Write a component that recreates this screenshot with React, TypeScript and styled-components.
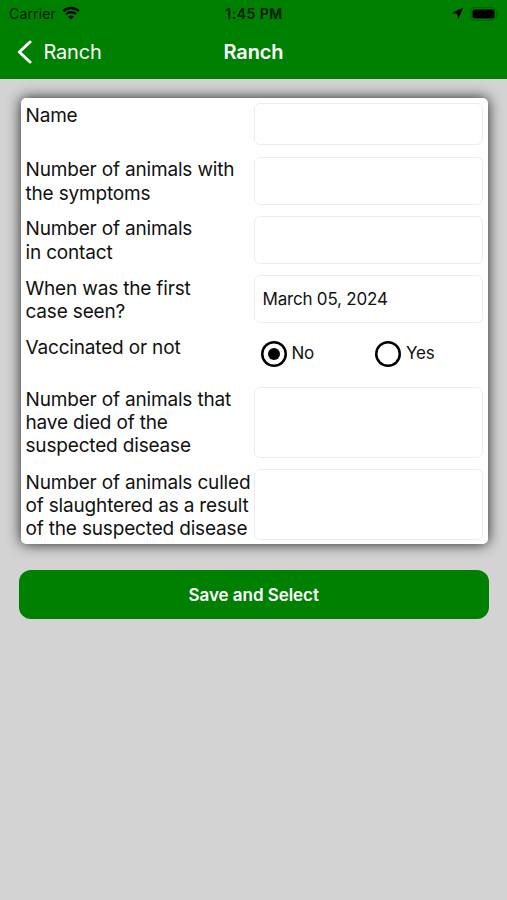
import { useState } from "react";
import styled, { createGlobalStyle } from "styled-components";

const GlobalStyle = createGlobalStyle`
  * {
    box-sizing: border-box;
  }

  body {
    margin: 0;
    background: #d3d3d3;
    font-family: Inter, "Liberation Sans", sans-serif;
    color: #111;
  }

  button,
  input {
    font: inherit;
    color: inherit;
  }
`;

const Screen = styled.div`
  min-height: 900px;
  background: #d3d3d3;
`;

const Header = styled.header`
  height: 79px;
  background: #008000;
`;

const StatusBar = styled.div`
  display: grid;
  grid-template-columns: 1fr auto 1fr;
  align-items: center;
  height: 27px;
  padding: 0 8px 0 9px;
  color: #021a02;
  font-size: 14px;
`;

const Carrier = styled.div`
  display: flex;
  align-items: center;
  gap: 6px;
  letter-spacing: 0.15px;

  svg {
    margin-top: -2px;
  }
`;

const Clock = styled.span`
  font-size: 14px;
  font-weight: 600;
  letter-spacing: 0.5px;
`;

const Indicators = styled.div`
  display: flex;
  align-items: center;
  justify-content: flex-end;
  gap: 7px;
`;

const NavBar = styled.nav`
  display: grid;
  grid-template-columns: 1fr auto 1fr;
  align-items: center;
  height: 50px;
  padding: 0 17px;
  color: #fff;
`;

const BackButton = styled.button`
  display: flex;
  align-items: center;
  gap: 11.5px;
  justify-self: start;
  padding: 0;
  border: 0;
  background: none;
  font-size: 20px;
  letter-spacing: -0.2px;
`;

const Title = styled.h1`
  margin: 0;
  font-size: 20px;
  font-weight: 600;
  letter-spacing: -0.1px;
`;

const Content = styled.main`
  padding: 19px 18.5px 0 19px;
`;

const Card = styled.section`
  display: flex;
  flex-direction: column;
  gap: 11.7px;
  height: 446px;
  margin: 0 1px 0 1.5px;
  padding: 4.5px 5px 0;
  border-radius: 5px;
  background: #fff;
  box-shadow: 0 0 14px rgba(0, 0, 0, 0.85);
`;

const Row = styled.div<{ $height: number }>`
  display: grid;
  grid-template-columns: 228px 1fr;
  flex: none;
  height: ${({ $height }) => $height}px;
`;

const Label = styled.label`
  padding-top: 1.4px;
  font-size: 19px;
  line-height: 23.3px;
  letter-spacing: -0.17px;
  white-space: pre;
`;

const Input = styled.input`
  width: 100%;
  height: 100%;
  padding: 0 8px;
  border: 1px solid #ededed;
  border-radius: 6px;
  outline: none;
  background: #fff;
  font-size: 17px;
  letter-spacing: -0.2px;
`;

const RadioGroup = styled.div`
  display: grid;
  grid-template-columns: 1fr 1fr;
  align-items: center;
  padding-left: 7px;
  padding-bottom: 1px;
`;

const Radio = styled.button`
  display: flex;
  align-items: center;
  gap: 5px;
  padding: 0;
  border: 0;
  background: none;
  font-size: 17px;
  letter-spacing: -0.2px;

  & + & {
    margin-left: 3.5px;
  }
`;

const RadioText = styled.span`
  padding-bottom: 3px;
`;

const RadioCircle = styled.span`
  display: grid;
  place-items: center;
  width: 26px;
  height: 26px;
  border-radius: 50%;
  box-shadow: inset 0 0 0 2.5px #000;
`;

const RadioDot = styled.span`
  width: 12px;
  height: 12px;
  border-radius: 50%;
  background: #000;
`;

const SaveButton = styled.button`
  display: block;
  width: 100%;
  height: 49px;
  margin-top: 25.5px;
  padding: 1px 0 0;
  border: 0;
  border-radius: 12px;
  background: #008000;
  color: #fff;
  font-size: 17px;
  font-weight: 600;
  letter-spacing: -0.05px;
`;

const WifiIcon = () => (
  <svg width="18" height="14" viewBox="0 0 18 14" fill="none" stroke="#000">
    <path d="M1.2 5.1a11.2 11.2 0 0 1 15.6 0" strokeWidth="2.5" />
    <path d="M4 8.2a7.2 7.2 0 0 1 10 0" strokeWidth="2.2" />
    <path d="M9 13.6 6.2 10.8a4 4 0 0 1 5.6 0z" fill="#000" stroke="none" />
  </svg>
);

const LocationIcon = () => (
  <svg width="11" height="11" viewBox="0 0 11 11">
    <path
      d="M10.7.3 6.3 10.6 5.5 5.6.3 4.9z"
      fill="#000"
      stroke="#000"
      strokeWidth="0.6"
      strokeLinejoin="round"
    />
  </svg>
);

const BatteryIcon = () => (
  <svg width="29" height="14" viewBox="0 0 29 14">
    <rect
      x="0.7"
      y="0.7"
      width="25.6"
      height="12.6"
      rx="3.8"
      fill="none"
      stroke="#006400"
      strokeWidth="1.2"
    />
    <rect x="2.5" y="2.5" width="22" height="9" rx="2" fill="#000" />
    <path d="M27.4 4.8c1.5.8 1.5 3.6 0 4.4z" fill="#006400" />
  </svg>
);

const BackIcon = () => (
  <svg width="15" height="24" viewBox="0 0 15 24" fill="none">
    <path
      d="M13 2 2.3 12 13 22"
      stroke="#fff"
      strokeWidth="3"
      strokeLinecap="round"
      strokeLinejoin="round"
    />
  </svg>
);

type Field = {
  id: string;
  label: string;
  height: number;
  value?: string;
  options?: string[];
};

const fields: Field[] = [
  { id: "name", label: "Name", height: 42.8 },
  {
    id: "symptoms",
    label: "Number of animals with\nthe symptoms",
    height: 47.4,
  },
  { id: "contact", label: "Number of animals\nin contact", height: 47.4 },
  {
    id: "firstCase",
    label: "When was the first\ncase seen?",
    height: 47.4,
    value: "March 05, 2024",
  },
  {
    id: "vaccinated",
    label: "Vaccinated or not",
    height: 40.6,
    options: ["No", "Yes"],
  },
  {
    id: "died",
    label: "Number of animals that\nhave died of the\nsuspected disease",
    height: 71,
  },
  {
    id: "culled",
    label:
      "Number of animals culled\nof slaughtered as a result\nof the suspected disease",
    height: 71,
  },
];

const App = () => {
  const [vaccinated, setVaccinated] = useState("No");

  return (
    <Screen>
      <GlobalStyle />
      <Header>
        <StatusBar>
          <Carrier>
            Carrier
            <WifiIcon />
          </Carrier>
          <Clock>1:45 PM</Clock>
          <Indicators>
            <LocationIcon />
            <BatteryIcon />
          </Indicators>
        </StatusBar>
        <NavBar>
          <BackButton>
            <BackIcon />
            Ranch
          </BackButton>
          <Title>Ranch</Title>
        </NavBar>
      </Header>
      <Content>
        <Card>
          {fields.map(({ id, label, height, value, options }) => (
            <Row key={id} $height={height}>
              <Label htmlFor={id}>{label}</Label>
              {options ? (
                <RadioGroup role="radiogroup">
                  {options.map((option) => (
                    <Radio
                      key={option}
                      role="radio"
                      aria-checked={vaccinated === option}
                      onClick={() => setVaccinated(option)}
                    >
                      <RadioCircle>
                        {vaccinated === option && <RadioDot />}
                      </RadioCircle>
                      <RadioText>{option}</RadioText>
                    </Radio>
                  ))}
                </RadioGroup>
              ) : (
                <Input id={id} defaultValue={value} />
              )}
            </Row>
          ))}
        </Card>
        <SaveButton>Save and Select</SaveButton>
      </Content>
    </Screen>
  );
};

export default App;
